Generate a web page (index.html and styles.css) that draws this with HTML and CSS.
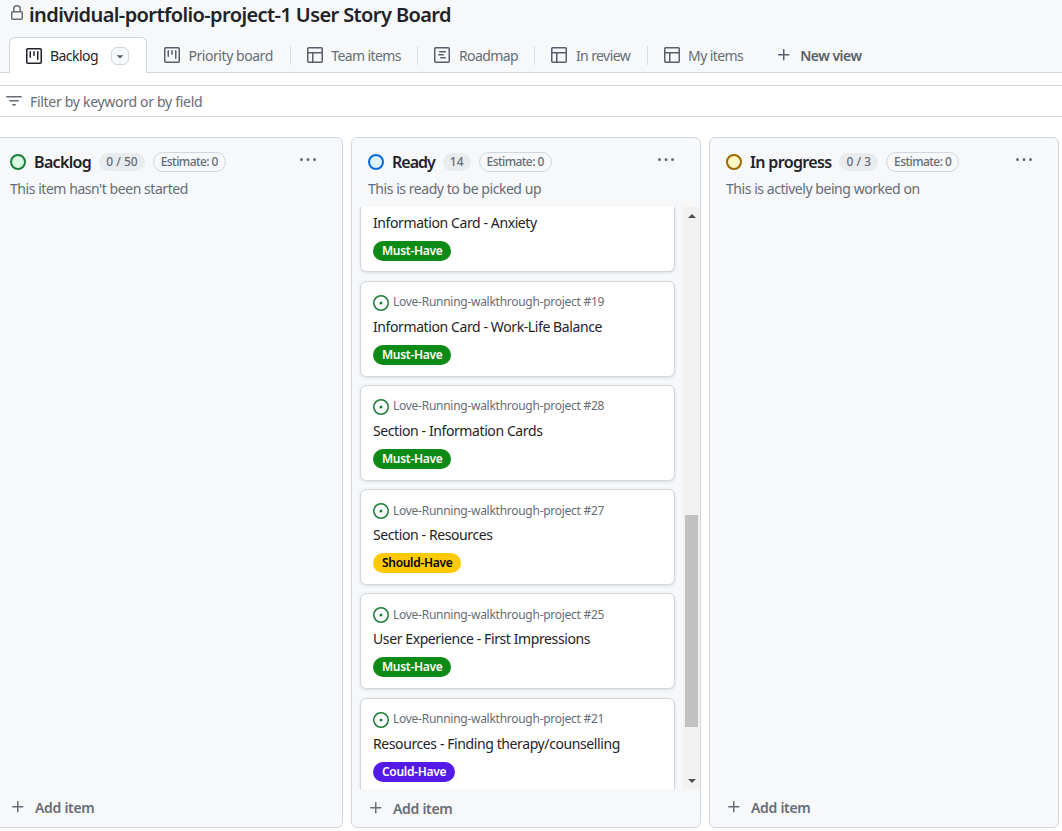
FILE: index.html
```html
<!DOCTYPE html>
<html lang="en">

<head>
  <meta charset="UTF-8">
  <meta name="viewport" content="width=device-width, initial-scale=1.0">
  <title>individual-portfolio-project-1 User Story Board</title>
  <link rel="stylesheet" href="styles.css">
</head>

<body>
  <!-- Octicon sprite -->
  <svg class="sprite" xmlns="http://www.w3.org/2000/svg">
    <symbol id="i-lock" viewBox="0 0 16 16"><path d="M4 4a4 4 0 0 1 8 0v2h.25c.966 0 1.75.784 1.75 1.75v5.5A1.75 1.75 0 0 1 12.25 15h-8.5A1.75 1.75 0 0 1 2 13.25v-5.5C2 6.784 2.784 6 3.75 6H4Zm8.25 3.5h-8.5a.25.25 0 0 0-.25.25v5.5c0 .138.112.25.25.25h8.5a.25.25 0 0 0 .25-.25v-5.5a.25.25 0 0 0-.25-.25ZM10.5 6V4a2.5 2.5 0 1 0-5 0v2Z"/></symbol>
    <symbol id="i-board" viewBox="0 0 16 16"><path d="M1.75 0h12.5C15.216 0 16 .784 16 1.75v12.5A1.75 1.75 0 0 1 14.25 16H1.75A1.75 1.75 0 0 1 0 14.25V1.75C0 .784.784 0 1.75 0ZM1.5 1.75v12.5c0 .138.112.25.25.25h12.5a.25.25 0 0 0 .25-.25V1.75a.25.25 0 0 0-.25-.25H1.75a.25.25 0 0 0-.25.25ZM11.75 3a.75.75 0 0 1 .75.75v7.5a.75.75 0 0 1-1.5 0v-7.5a.75.75 0 0 1 .75-.75Zm-8.25.75a.75.75 0 0 1 1.5 0v5.5a.75.75 0 0 1-1.5 0ZM8 3a.75.75 0 0 1 .75.75v3.5a.75.75 0 0 1-1.5 0v-3.5A.75.75 0 0 1 8 3Z"/></symbol>
    <symbol id="i-table" viewBox="0 0 16 16"><path d="M0 1.75C0 .784.784 0 1.75 0h12.5C15.216 0 16 .784 16 1.75v12.5A1.75 1.75 0 0 1 14.25 16H1.75A1.75 1.75 0 0 1 0 14.25ZM6.5 6.5v8h7.75a.25.25 0 0 0 .25-.25V6.5Zm8-1.5V1.75a.25.25 0 0 0-.25-.25H1.75a.25.25 0 0 0-.25.25V5Zm-13 1.5v7.75c0 .138.112.25.25.25H5v-8Z"/></symbol>
    <symbol id="i-roadmap" viewBox="0 0 16 16"><path d="M4.75 7a.75.75 0 0 0 0 1.5h4.5a.75.75 0 0 0 0-1.5h-4.5ZM5 4.75A.75.75 0 0 1 5.75 4h5.5a.75.75 0 0 1 0 1.5h-5.5A.75.75 0 0 1 5 4.75ZM6.75 10a.75.75 0 0 0 0 1.5h4.5a.75.75 0 0 0 0-1.5h-4.5Z"/><path d="M0 1.75C0 .784.784 0 1.75 0h12.5C15.216 0 16 .784 16 1.75v12.5A1.75 1.75 0 0 1 14.25 16H1.75A1.75 1.75 0 0 1 0 14.25ZM1.75 1.5a.25.25 0 0 0-.25.25v12.5c0 .138.112.25.25.25h12.5a.25.25 0 0 0 .25-.25V1.75a.25.25 0 0 0-.25-.25Z"/></symbol>
    <symbol id="i-plus" viewBox="0 0 16 16"><path d="M7.75 2a.75.75 0 0 1 .75.75V7h4.25a.75.75 0 0 1 0 1.5H8.5v4.25a.75.75 0 0 1-1.5 0V8.5H2.75a.75.75 0 0 1 0-1.5H7V2.75A.75.75 0 0 1 7.75 2Z"/></symbol>
    <symbol id="i-filter" viewBox="0 0 16 16"><path d="M.75 3h14.5a.75.75 0 0 1 0 1.5H.75a.75.75 0 0 1 0-1.5ZM3 7.75A.75.75 0 0 1 3.75 7h8.5a.75.75 0 0 1 0 1.5h-8.5A.75.75 0 0 1 3 7.75Zm3 4a.75.75 0 0 1 .75-.75h2.5a.75.75 0 0 1 0 1.5h-2.5a.75.75 0 0 1-.75-.75Z"/></symbol>
    <symbol id="i-kebab" viewBox="0 0 16 16"><path d="M8 9a1.5 1.5 0 1 0 0-3 1.5 1.5 0 0 0 0 3ZM1.5 9a1.5 1.5 0 1 0 0-3 1.5 1.5 0 0 0 0 3Zm13 0a1.5 1.5 0 1 0 0-3 1.5 1.5 0 0 0 0 3Z"/></symbol>
    <symbol id="i-caret" viewBox="0 0 16 16"><path d="m4.427 7.427 3.396 3.396a.25.25 0 0 0 .354 0l3.396-3.396A.25.25 0 0 0 11.396 7H4.604a.25.25 0 0 0-.177.427Z"/></symbol>
    <symbol id="i-issue" viewBox="0 0 16 16"><path d="M8 9.5a1.5 1.5 0 1 0 0-3 1.5 1.5 0 0 0 0 3Z"/><path d="M8 0a8 8 0 1 1 0 16A8 8 0 0 1 8 0ZM1.5 8a6.5 6.5 0 1 0 13 0 6.5 6.5 0 0 0-13 0Z"/></symbol>
  </svg>

  <header class="page-head">
    <h1 class="title">
      <svg class="icon lock"><use href="#i-lock"/></svg>
      <span>individual-portfolio-project-1 User Story Board</span>
    </h1>
    <nav class="tabs">
      <a class="tab active">
        <svg class="icon"><use href="#i-board"/></svg>
        <span>Backlog</span>
        <span class="tab-caret"><svg class="icon"><use href="#i-caret"/></svg></span>
      </a>
      <a class="tab sep priority"><svg class="icon"><use href="#i-board"/></svg><span>Priority board</span></a>
      <a class="tab sep"><svg class="icon"><use href="#i-table"/></svg><span>Team items</span></a>
      <a class="tab sep"><svg class="icon"><use href="#i-roadmap"/></svg><span>Roadmap</span></a>
      <a class="tab sep"><svg class="icon"><use href="#i-table"/></svg><span>In review</span></a>
      <a class="tab"><svg class="icon"><use href="#i-table"/></svg><span>My items</span></a>
      <a class="tab new-view"><svg class="icon"><use href="#i-plus"/></svg><span>New view</span></a>
    </nav>
  </header>

  <div class="filter">
    <svg class="icon"><use href="#i-filter"/></svg>
    <span>Filter by keyword or by field</span>
  </div>

  <main class="board">
    <!-- Backlog -->
    <section class="column">
      <div class="col-head">
        <div class="col-title">
          <span class="status green"></span>
          <h2>Backlog</h2>
          <span class="counter">0 / 50</span>
          <span class="estimate">Estimate: 0</span>
          <svg class="icon kebab"><use href="#i-kebab"/></svg>
        </div>
        <p class="col-desc">This item hasn't been started</p>
      </div>
      <div class="col-body"></div>
      <div class="col-foot"><svg class="icon"><use href="#i-plus"/></svg><span>Add item</span></div>
    </section>

    <!-- Ready -->
    <section class="column ready">
      <div class="col-head">
        <div class="col-title">
          <span class="status blue"></span>
          <h2>Ready</h2>
          <span class="counter">14</span>
          <span class="estimate">Estimate: 0</span>
          <svg class="icon kebab"><use href="#i-kebab"/></svg>
        </div>
        <p class="col-desc">This is ready to be picked up</p>
      </div>
      <div class="col-body">
        <div class="cards">
          <!-- Primera tarjeta cortada por el scroll -->
          <article class="card card-cut">
            <div class="card-title">Information Card - Anxiety</div>
            <span class="label must">Must-Have</span>
          </article>
          <article class="card">
            <div class="card-meta"><svg class="icon issue"><use href="#i-issue"/></svg><span>Love-Running-walkthrough-project #19</span></div>
            <div class="card-title">Information Card - Work-Life Balance</div>
            <span class="label must">Must-Have</span>
          </article>
          <article class="card">
            <div class="card-meta"><svg class="icon issue"><use href="#i-issue"/></svg><span>Love-Running-walkthrough-project #28</span></div>
            <div class="card-title">Section - Information Cards</div>
            <span class="label must">Must-Have</span>
          </article>
          <article class="card">
            <div class="card-meta"><svg class="icon issue"><use href="#i-issue"/></svg><span>Love-Running-walkthrough-project #27</span></div>
            <div class="card-title">Section - Resources</div>
            <span class="label should">Should-Have</span>
          </article>
          <article class="card">
            <div class="card-meta"><svg class="icon issue"><use href="#i-issue"/></svg><span>Love-Running-walkthrough-project #25</span></div>
            <div class="card-title">User Experience - First Impressions</div>
            <span class="label must">Must-Have</span>
          </article>
          <article class="card">
            <div class="card-meta"><svg class="icon issue"><use href="#i-issue"/></svg><span>Love-Running-walkthrough-project #21</span></div>
            <div class="card-title">Resources - Finding therapy/counselling</div>
            <span class="label could">Could-Have</span>
          </article>
        </div>
        <div class="scrollbar">
          <span class="arrow up"></span>
          <span class="thumb"></span>
          <span class="arrow down"></span>
        </div>
      </div>
      <div class="col-foot"><svg class="icon"><use href="#i-plus"/></svg><span>Add item</span></div>
    </section>

    <!-- In progress -->
    <section class="column">
      <div class="col-head">
        <div class="col-title">
          <span class="status yellow"></span>
          <h2>In progress</h2>
          <span class="counter">0 / 3</span>
          <span class="estimate">Estimate: 0</span>
          <svg class="icon kebab"><use href="#i-kebab"/></svg>
        </div>
        <p class="col-desc">This is actively being worked on</p>
      </div>
      <div class="col-body"></div>
      <div class="col-foot"><svg class="icon"><use href="#i-plus"/></svg><span>Add item</span></div>
    </section>
  </main>
</body>

</html>
```

FILE: styles.css
```css
* {
  margin: 0;
  padding: 0;
  box-sizing: border-box;
}

body {
  height: 831px;
  overflow: hidden;
  background: #fff;
  color: #1f2328;
  font-family: "Noto Sans", "Open Sans", sans-serif;
  font-size: 14px;
  letter-spacing: -0.3px;
}

.sprite {
  display: none;
}

.icon {
  width: 16px;
  height: 16px;
  flex: none;
  fill: currentColor;
}

/* Cabecera */
.page-head {
  height: 73px;
  background: #f6f8fa;
  border-bottom: 1px solid #d0d7de;
}

.title {
  display: flex;
  align-items: center;
  gap: 4px;
  height: 37px;
  padding: 0 0 7px 9px;
  font-size: 20px;
  font-weight: 600;
  line-height: 30px;
  letter-spacing: -0.6px;
}

.lock {
  color: #656d76;
  margin-top: -4px;
}

/* Pestañas */
.tabs {
  display: flex;
  height: 36px;
  padding-left: 9px;
}

.tab {
  display: flex;
  align-items: center;
  gap: 8.5px;
  height: 36px;
  padding: 0 16.5px 0 17px;
  color: #656d76;
  letter-spacing: -0.6px;
  position: relative;
}

.tab .icon {
  color: #57606a;
}

.tab.sep::after {
  content: "";
  position: absolute;
  right: -1px;
  top: 9px;
  width: 1px;
  height: 19px;
  background: #d8dee4;
}

.tab.priority {
  padding-right: 17px;
  letter-spacing: -0.45px;
}

.tab.active {
  gap: 8px;
  padding: 0 17px 0 16px;
  color: #1f2328;
  letter-spacing: -0.55px;
  background: #fff;
  border: 1px solid #d0d7de;
  border-bottom: 0;
  border-radius: 6px 6px 0 0;
}

.tab.active .icon {
  color: #1f2328;
}

.tab-caret {
  display: flex;
  align-items: center;
  justify-content: center;
  width: 18px;
  height: 18px;
  margin-left: 5px;
  background: #f6f8fa;
  border: 1px solid #d0d7de;
  border-radius: 6px;
}

.tab-caret .icon,
.tab.active .tab-caret .icon {
  width: 14px;
  height: 14px;
  color: #57606a;
}

.tab.new-view {
  gap: 8.5px;
  padding-left: 16px;
  font-weight: 600;
  letter-spacing: -0.5px;
  color: #57606a;
}

/* Filtro */
.filter {
  display: flex;
  align-items: center;
  gap: 8px;
  height: 32px;
  margin-top: 12px;
  padding-left: 6px;
  border-top: 1px solid #d0d7de;
  border-bottom: 1px solid #d0d7de;
  color: #656d76;
}

/* Tablero */
.board {
  display: flex;
  gap: 8px;
  height: 691px;
  margin: 20px 0 0 -7px;
}

.column {
  display: flex;
  flex-direction: column;
  flex: none;
  width: 350px;
  background: #f6f8fa;
  border: 1px solid #d0d7de;
  border-radius: 6px;
  overflow: hidden;
}

.col-head {
  height: 69px;
  padding: 14px 16px 0;
}

.col-title {
  display: flex;
  align-items: center;
  gap: 8px;
  height: 20px;
}

.col-title h2 {
  font-size: 16px;
  font-weight: 600;
  letter-spacing: -0.65px;
}

.ready .col-title h2 {
  letter-spacing: -1px;
}

.status {
  width: 16px;
  height: 16px;
  border-radius: 50%;
  border: 2px solid;
}

.status.green {
  background: #dafbe1;
  border-color: #1a7f37;
}

.status.blue {
  background: #ddf4ff;
  border-color: #0969da;
}

.status.yellow {
  background: #fff8c5;
  border-color: #9a6700;
}

.counter {
  height: 18px;
  padding: 0 7px;
  border-radius: 9px;
  background: #e9ecef;
  color: #656d76;
  font-size: 12px;
  font-weight: 500;
  line-height: 18px;
  letter-spacing: 0;
}

.estimate {
  height: 20px;
  padding: 0 7px;
  border: 1px solid #d0d7de;
  border-radius: 10px;
  color: #656d76;
  font-size: 12px;
  font-weight: 500;
  line-height: 18px;
  letter-spacing: -0.55px;
}

.kebab {
  margin-left: auto;
  margin-right: 10px;
  margin-top: -4px;
  color: #656d76;
}

.col-desc {
  margin-top: 7px;
  color: #656d76;
  line-height: 20px;
  letter-spacing: -0.45px;
}

.col-body {
  display: flex;
  flex: 1;
  min-height: 0;
  overflow: hidden;
}

.cards {
  flex: 1;
  min-width: 0;
  margin-left: 8px;
  padding-right: 8px;
}

.card {
  height: 96px;
  margin-bottom: 8.25px;
  padding: 11px 12px 0;
  background: #fff;
  border: 1px solid #d0d7de;
  border-radius: 6px;
  box-shadow: 0 1px 3px rgba(31, 35, 40, 0.12);
}

.card-cut {
  height: 65.35px;
  padding-top: 1px;
  border-top: 0;
  border-radius: 0 0 6px 6px;
}

.card-cut .card-title {
  margin-top: 4px;
}

.card-meta {
  display: flex;
  align-items: center;
  gap: 4px;
  height: 18px;
  color: #656d76;
  font-size: 12px;
  letter-spacing: -0.27px;
}

.issue {
  color: #1a7f37;
  margin-top: 2px;
}

.card-title {
  margin-top: 5px;
  line-height: 21px;
  letter-spacing: -0.4px;
}

.label {
  display: inline-block;
  height: 20px;
  margin-top: 8px;
  padding: 0 9px;
  border-radius: 10px;
  font-size: 12px;
  font-weight: 600;
  line-height: 20px;
}

.must {
  background: #0e8a16;
  color: #fff;
}

.should {
  background: #fbca04;
  color: #000;
}

.could {
  background: #5319e7;
  color: #fff;
}

/* Barra de desplazamiento */
.scrollbar {
  display: flex;
  flex-direction: column;
  flex: none;
  width: 17px;
  background: #f1f1f1;
}

.arrow {
  flex: none;
  height: 17px;
  display: flex;
  align-items: center;
  justify-content: center;
}

.arrow::before {
  content: "";
  border-left: 4px solid transparent;
  border-right: 4px solid transparent;
}

.arrow.up::before {
  border-bottom: 4px solid #505050;
}

.arrow.down::before {
  border-top: 4px solid #505050;
}

.thumb {
  flex: none;
  width: 13px;
  height: 212px;
  margin: 291px 0 45px 2px;
  background: #c1c1c1;
}

.col-foot {
  display: flex;
  align-items: center;
  gap: 9px;
  height: 38px;
  padding: 0 0 2px 16px;
  color: #656d76;
  font-weight: 600;
}

.ready .col-foot {
  padding-bottom: 0;
}
```
